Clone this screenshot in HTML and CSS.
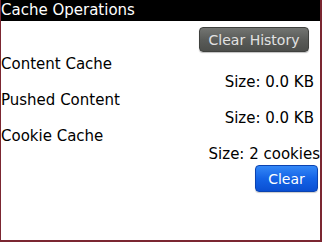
FILE: index.html
```html
<!DOCTYPE html>
<html>
<head>
<meta charset="utf-8">
<link rel="stylesheet" href="styles.css">
</head>
<body>
<div class="frame">
  <div class="titlebar">Cache Operations</div>
  <div class="toolbar toolbar-top">
    <button class="btn btn-gray">Clear History</button>
  </div>
  <div class="group">
    <div class="label">Content Cache</div>
    <div class="size size-inset">Size: 0.0 KB</div>
  </div>
  <div class="group">
    <div class="label">Pushed Content</div>
    <div class="size size-inset">Size: 0.0 KB</div>
  </div>
  <div class="group">
    <div class="label">Cookie Cache</div>
    <div class="size">Size: 2 cookies</div>
  </div>
  <div class="toolbar toolbar-bottom">
    <button class="btn btn-blue">Clear</button>
  </div>
</div>
</body>
</html>
```
FILE: styles.css
```css
html, body {
  margin: 0;
  padding: 0;
  background: #ffffff;
}
.frame {
  width: 322px;
  height: 242px;
  box-sizing: border-box;
  border-left: 1px solid #7b2631;
  border-right: 2px solid #7b2631;
  border-bottom: 2px solid #7b2631;
  background: #ffffff;
  font-family: "DejaVu Sans", sans-serif;
  font-size: 15px;
  color: #000000;
  overflow: hidden;
}
.titlebar {
  height: 21px;
  line-height: 20px;
  background: #000000;
  color: #ffffff;
  white-space: nowrap;
}
.toolbar {
  display: flex;
  justify-content: flex-end;
}
.toolbar-top {
  padding-top: 6px;
  padding-right: 11px;
}
.toolbar-bottom {
  padding-top: 2px;
  padding-right: 2px;
}
.btn {
  font-family: "DejaVu Sans", sans-serif;
  font-size: 14px;
  margin: 0;
  padding: 0;
  border-radius: 4px;
  box-sizing: border-box;
  cursor: pointer;
}
.btn-gray {
  width: 110px;
  height: 25px;
  color: #e2e2e2;
  border: 1px solid #3f413e;
  background: linear-gradient(#737572, #5a5c59 50%, #4c4e4b);
  box-shadow: 0 1px 1px rgba(0, 0, 0, 0.25);
}
.btn-blue {
  width: 63px;
  height: 27px;
  color: #ffffff;
  border: 1px solid #0b43b0;
  background: linear-gradient(#3488f7, #1463e6 50%, #0a4fd2);
  box-shadow: 0 1px 1px rgba(0, 0, 0, 0.2);
}
.group:first-of-type {
  margin-top: 0;
}
.toolbar-top + .group {
  margin-top: 3px;
}
.group {
  height: 36px;
}
.label {
  line-height: 18px;
  white-space: nowrap;
}
.size {
  line-height: 17px;
  padding-top: 1px;
  text-align: right;
  white-space: nowrap;
}
.size-inset {
  padding-right: 6px;
}
```
